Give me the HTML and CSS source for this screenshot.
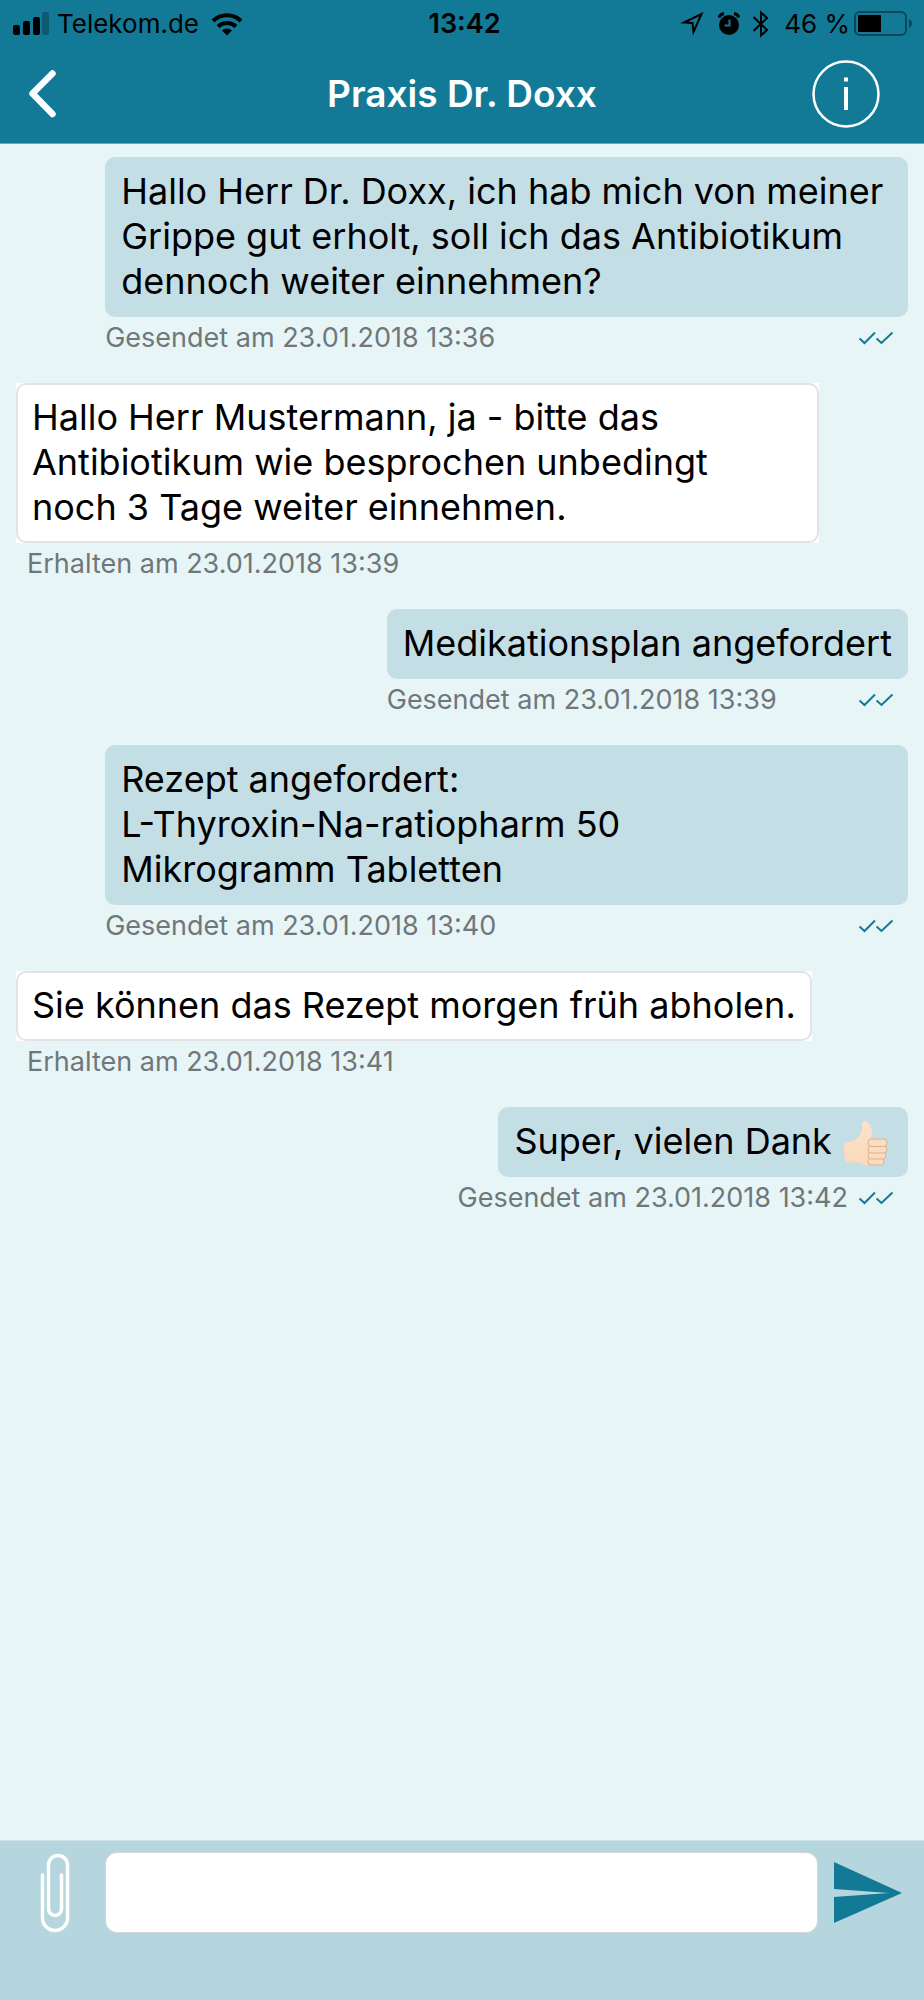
FILE: index.html
```html
<!DOCTYPE html>
<html lang="de">
<head>
<meta charset="utf-8">
<meta name="viewport" content="width=device-width, initial-scale=1">
<title>Praxis Dr. Doxx</title>
<link rel="stylesheet" href="styles.css">
</head>
<body>
<svg class="defs" aria-hidden="true">
  <symbol id="ticks" viewBox="0 0 36 14">
    <path d="M1.5 7.5 6.5 12 17 1.5M18.5 7.5 23.500 12 34.500 1.500" fill="none" stroke="currentColor" stroke-width="2"/>
  </symbol>
</svg>
<header class="top">
  <div class="status">
    <div class="status-side">
      <svg class="signal" viewBox="0 0 36 24" aria-hidden="true">
        <rect x="0" y="13" width="7" height="10" rx="2"/>
        <rect x="10" y="9" width="7" height="14" rx="2"/>
        <rect x="20" y="5" width="7" height="18" rx="2"/>
        <rect x="29" y="0" width="7" height="23" rx="2" opacity=".25"/>
      </svg>
      <span>Telekom.de</span>
      <svg class="wifi" viewBox="0 0 32 24" aria-hidden="true">
        <path d="M2 9a20 20 0 0 1 28 0M7 14.500a13 13 0 0 1 18 0" fill="none" stroke="#000" stroke-width="4"/>
        <path d="M11 18.500a7.500 7.500 0 0 1 10 0L16 23.500z"/>
      </svg>
    </div>
    <time class="clock">13:42</time>
    <div class="status-side status-right">
      <svg class="location" viewBox="0 0 24 24" aria-hidden="true">
        <path d="M4 10.500 21.500 2 13.500 20 12.500 11z" fill="none" stroke="#000" stroke-width="2"/>
      </svg>
      <svg class="alarm" viewBox="0 0 22 24" aria-hidden="true">
        <circle cx="11" cy="13" r="10"/>
        <path d="M1 5.500A6 6 0 0 1 6 1.500M21 5.500A6 6 0 0 0 16 1.500" fill="none" stroke="#000" stroke-width="3"/>
        <path d="M11.500 7.500V13.500H6.500" fill="none" stroke="#127a97" stroke-width="2"/>
      </svg>
      <svg class="bluetooth" viewBox="0 0 18 28" aria-hidden="true">
        <path d="M1.500 7 15 20 9 25.500V2.500L15 8 1.500 21" fill="none" stroke="#000" stroke-width="2"/>
      </svg>
      <span class="percent">46 %</span>
      <svg class="battery" viewBox="0 0 58 26" aria-hidden="true">
        <rect x="1" y="1" width="51" height="23" rx="5" fill="none" stroke="#000" stroke-width="2" opacity=".4"/>
        <rect x="4" y="4" width="23" height="17" rx="1"/>
        <path d="M55 8c4 2 4 7 0 9z" opacity=".4"/>
      </svg>
    </div>
  </div>
  <nav class="bar">
    <button class="icon-button" type="button" aria-label="Zurück">
      <svg class="back" viewBox="0 0 28 48" aria-hidden="true"><path d="M24.500 3.500 4.500 23.500 24.500 44" fill="none" stroke="#fff" stroke-width="6.500" stroke-linecap="round" stroke-linejoin="round"/></svg>
    </button>
    <h1 class="title">Praxis Dr. Doxx</h1>
    <button class="icon-button" type="button" aria-label="Info">
      <svg class="info" viewBox="0 0 68 68" aria-hidden="true"><circle cx="34" cy="34" r="32.500" fill="none" stroke="#fff" stroke-width="2.500"/><path d="M32 17.500h4v4h-4zM32 27h4v23h-4z" fill="#fff"/></svg>
    </button>
  </nav>
</header>
<main class="chat">
  <article class="message sent">
    <p class="bubble">Hallo Herr Dr. Doxx, ich hab mich von meiner Grippe gut erholt, soll ich das Antibiotikum dennoch weiter einnehmen?</p>
    <div class="meta"><span>Gesendet am 23.01.2018 13:36</span><svg class="ticks" role="img" aria-label="Gelesen"><use href="#ticks"/></svg></div>
  </article>
  <article class="message received">
    <p class="bubble">Hallo Herr Mustermann, ja - bitte das Antibiotikum wie besprochen unbedingt noch&nbsp;3 Tage weiter einnehmen.</p>
    <div class="meta"><span>Erhalten am 23.01.2018 13:39</span></div>
  </article>
  <article class="message sent">
    <p class="bubble">Medikationsplan angefordert</p>
    <div class="meta"><span>Gesendet am 23.01.2018 13:39</span><svg class="ticks" role="img" aria-label="Gelesen"><use href="#ticks"/></svg></div>
  </article>
  <article class="message sent">
    <p class="bubble">Rezept angefordert:<br>L-Thyroxin-Na-ratiopharm 50 Mikrogramm&nbsp;Tabletten</p>
    <div class="meta"><span>Gesendet am 23.01.2018 13:40</span><svg class="ticks" role="img" aria-label="Gelesen"><use href="#ticks"/></svg></div>
  </article>
  <article class="message received">
    <p class="bubble">Sie können das Rezept morgen früh abholen.</p>
    <div class="meta"><span>Erhalten am 23.01.2018 13:41</span></div>
  </article>
  <article class="message sent">
    <p class="bubble">Super, vielen Dank <svg class="thumb" viewBox="0 0 46 46" role="img" aria-label="Daumen hoch">
      <defs><linearGradient id="skin" x1="0" y1="0" x2="0" y2="1"><stop offset="0" stop-color="#fde3c8"/><stop offset="1" stop-color="#f9d9bb"/></linearGradient></defs>
      <path d="M2 25c0-2 2-3 5-3 6-1 10-5 12-9 2-3 1-6 1-9 0-3 3-4 5-2 3 2 5 6 5 10 0 3-1 6-2 9l4 2v20c-1 2-5 2-9 2-5-1-8-4-12-3-4 1-7 1-8-2-1-5-1-10-1-15z" fill="url(#skin)"/>
      <g fill="#fbdcc0" stroke="#dfb08c" stroke-width="1">
        <rect x="26" y="38" width="16" height="7" rx="3.500"/>
        <rect x="26" y="32" width="18" height="7" rx="3.500"/>
        <rect x="26" y="26" width="19" height="7" rx="3.500"/>
        <rect x="26" y="19" width="19" height="7.500" rx="3.500"/>
      </g>
    </svg></p>
    <div class="meta"><span>Gesendet am 23.01.2018 13:42</span><svg class="ticks" role="img" aria-label="Gelesen"><use href="#ticks"/></svg></div>
  </article>
</main>
<form class="composer">
  <button class="icon-button attach" type="button" aria-label="Anhang hinzufügen">
    <svg class="clip" viewBox="0 0 30 80" aria-hidden="true"><path d="M2.500 22V65a12.500 12.500 0 0 0 25 0V12a9.500 9.500 0 0 0-19 0V56a6.500 6.500 0 0 0 13 0V22" fill="none" stroke="#fff" stroke-width="3.500" stroke-linecap="round"/></svg>
  </button>
  <input class="field" type="text" aria-label="Nachricht">
  <button class="icon-button" type="submit" aria-label="Senden">
    <svg class="send" viewBox="0 0 68 62" aria-hidden="true"><path d="M0 0 68 31 0 61V35L55 31 0 27z" fill="#127a97"/></svg>
  </button>
</form>
</body>
</html>
```
FILE: styles.css
```css
* {
  box-sizing: border-box;
}

body {
  margin: 0;
  min-height: 100vh;
  display: flex;
  flex-direction: column;
  background: #e7f5f7;
  color: #000;
  font-family: Inter, "Liberation Sans", sans-serif;
}

.defs {
  position: absolute;
  width: 0;
  height: 0;
}

.top {
  height: 144px;
  background: #127a97;
  border-bottom: 1px solid #6fa9b8;
}

.status {
  display: grid;
  grid-template-columns: 1fr auto 1fr;
  align-items: center;
  height: 48px;
  padding: 0 12px 0 13px;
  font-size: 26px;
  line-height: 32px;
}

.status-side {
  display: flex;
  align-items: center;
  gap: 8px;
}

.status-right {
  justify-content: flex-end;
}

.clock {
  padding-left: 4px;
  font-size: 27px;
  font-weight: 600;
}

.signal {
  width: 36px;
  height: 24px;
}

.wifi {
  width: 32px;
  height: 24px;
  margin-left: 4px;
}

.location {
  width: 24px;
  height: 24px;
  margin-right: 6px;
}

.alarm {
  width: 22px;
  height: 24px;
  margin-right: 4px;
}

.bluetooth {
  width: 18px;
  height: 28px;
  margin-right: 6px;
}

.percent {
  margin-right: -4px;
}

.battery {
  width: 58px;
  height: 26px;
}

.bar {
  display: grid;
  grid-template-columns: 68px 1fr 68px;
  align-items: center;
  height: 92px;
  padding: 0 44px 0 28px;
}

.icon-button {
  display: flex;
  padding: 0;
  border: 0;
  background: none;
  cursor: pointer;
}

.back {
  width: 28px;
  height: 48px;
}

.info {
  width: 68px;
  height: 68px;
}

.title {
  margin: 0;
  padding-left: 16px;
  color: #fff;
  font-size: 37px;
  font-weight: 600;
  line-height: 44px;
  text-align: center;
}

.chat {
  flex: 1;
  display: flex;
  flex-direction: column;
  gap: 24px;
  padding: 13px 16px;
}

.message {
  display: flex;
  flex-direction: column;
  max-width: 90%;
}

.sent {
  align-self: flex-end;
  align-items: flex-end;
}

.received {
  align-self: flex-start;
  align-items: flex-start;
}

.bubble {
  margin: 0;
  padding: 12px 16px 13px;
  border-radius: 10px;
  font-size: 36px;
  line-height: 45px;
}

.sent .bubble {
  background: #c4dee5;
}

.received .bubble {
  position: relative;
  border-radius: 0;
  background: #fff;
}

.received .bubble::after {
  content: "";
  position: absolute;
  inset: 0;
  border: 2px solid #e3e3e5;
  border-radius: 10px;
}

.thumb {
  width: 46px;
  height: 46px;
  margin: -4px 4px -4px 0;
  vertical-align: -8px;
}

.meta {
  display: flex;
  align-items: center;
  justify-content: space-between;
  gap: 10px;
  align-self: stretch;
  padding: 3px 0;
  color: #6f777a;
  font-size: 27px;
  line-height: 36px;
}

.sent .meta {
  padding-right: 14px;
}

.received .meta {
  padding-left: 11px;
}

.ticks {
  width: 36px;
  height: 14px;
  color: #127a97;
}

.composer {
  display: flex;
  align-items: center;
  gap: 16px;
  padding: 11px 22px 67px 40px;
  border-top: 1px solid #cde2e6;
  background: #b5d6de;
}

.attach {
  margin-right: 19px;
}

.clip {
  width: 30px;
  height: 80px;
}

.field {
  flex: 1;
  min-width: 0;
  height: 81px;
  padding: 0 16px;
  border: 1px solid #d6d6d8;
  border-radius: 12px;
  background: #fff;
  font: inherit;
  font-size: 36px;
}

.send {
  width: 68px;
  height: 62px;
}
```
